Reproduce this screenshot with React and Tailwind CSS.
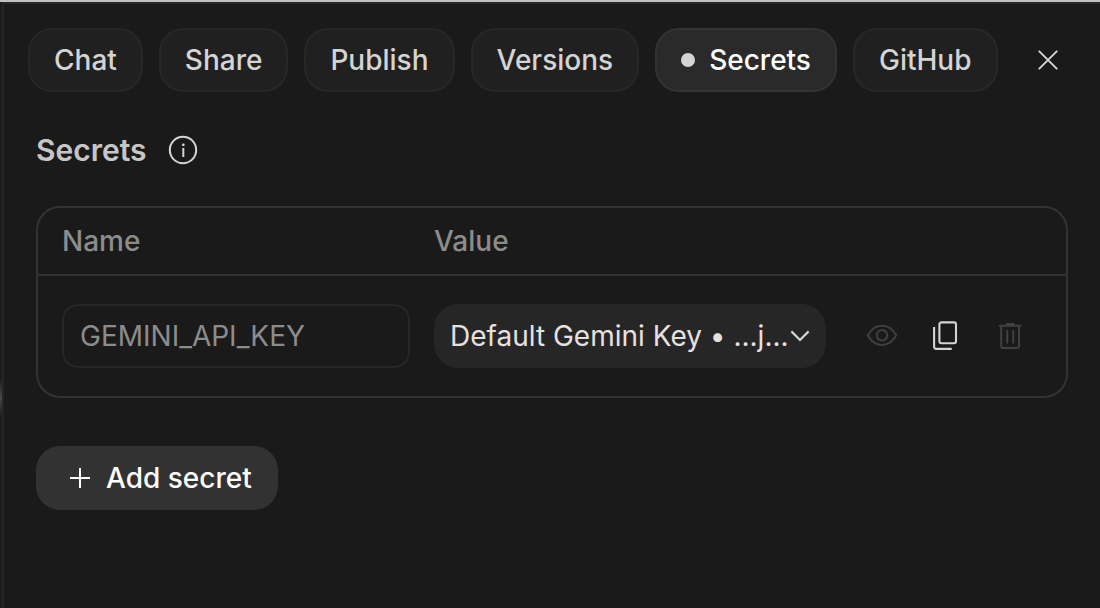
import React, { useState } from "react";

const TABS = ["Chat", "Share", "Publish", "Versions", "Secrets", "GitHub"];

function CloseIcon() {
  return (
    <svg width="24" height="24" viewBox="0 0 24 24" fill="none" stroke="currentColor" strokeWidth="1.9" aria-hidden="true">
      <path d="M2.8 2.8 21.2 21.2M21.2 2.8 2.8 21.2" />
    </svg>
  );
}

function InfoIcon() {
  return (
    <svg width="32" height="32" viewBox="0 0 32 32" fill="none" stroke="currentColor" strokeWidth="2" aria-hidden="true">
      <circle cx="16" cy="16" r="13.2" />
      <path d="M16.3 14v9" />
      <circle cx="16.3" cy="10.8" r="1.4" fill="currentColor" stroke="none" />
    </svg>
  );
}

function ChevronIcon() {
  return (
    <svg width="20" height="12" viewBox="0 0 20 12" fill="none" stroke="currentColor" strokeWidth="2.2" aria-hidden="true">
      <path d="M1.4 1.4 10 10 18.6 1.4" />
    </svg>
  );
}

function EyeIcon() {
  return (
    <svg width="32" height="32" viewBox="0 0 32 32" fill="none" stroke="currentColor" strokeWidth="2" strokeLinejoin="round" aria-hidden="true">
      <path d="M1.8 15.3C5.2 8.9 10.2 5.7 16 5.7S26.8 8.9 30.2 15.3C26.8 21.7 21.8 24.9 16 24.9S5.2 21.7 1.8 15.3Z" />
      <circle cx="16" cy="15.3" r="5.2" />
    </svg>
  );
}

function CopyIcon() {
  return (
    <svg width="32" height="32" viewBox="0 0 32 32" fill="none" stroke="currentColor" strokeWidth="2.1" aria-hidden="true">
      <rect x="9.4" y="2.4" width="16.6" height="20.8" rx="2" />
      <path d="M4.1 7v19.8a2.1 2.1 0 0 0 2.1 2.1H21.7" />
    </svg>
  );
}

function TrashIcon() {
  return (
    <svg width="32" height="32" viewBox="0 0 32 32" fill="none" stroke="currentColor" strokeWidth="2" aria-hidden="true">
      <path d="M5 5.7h22.4M12 4h8.4M7.2 5.7v20.3a2 2 0 0 0 2 2h13.8a2 2 0 0 0 2-2V5.7M13.2 10v13.4M19.2 10v13.4" />
    </svg>
  );
}

function PlusIcon() {
  return (
    <svg width="24" height="24" viewBox="0 0 24 24" fill="none" stroke="currentColor" strokeWidth="2" aria-hidden="true">
      <path d="M12 2v20M2 12h20" />
    </svg>
  );
}

function Tab({ label, active, onSelect }) {
  return (
    <button
      type="button"
      aria-pressed={active}
      onClick={onSelect}
      className={
        active
          ? "flex h-16 items-center gap-3.5 rounded-3xl border-2 border-[#333333] bg-[#2a2a2a] px-6 font-medium text-white"
          : "flex h-16 items-center rounded-3xl border-2 border-[#272727] bg-[#202020] px-6 font-medium text-[#d4d4d4]"
      }
    >
      {active && <span className="size-3.5 rounded-full bg-[#d4d4d4]" />}
      {label}
    </button>
  );
}

export default function App() {
  const [tab, setTab] = useState("Secrets");

  return (
    <div className="flex min-h-screen flex-col border-t-2 border-[#bfc1c2] bg-[#1a1a1a] font-['Inter',sans-serif] text-[28px] leading-9 text-[#d4d4d4]">
      <div className="flex grow">
        <div className="flex w-0.5 shrink-0 flex-col bg-[#1c1c1c] pt-94">
          <span className="h-10 bg-linear-to-b from-[#1c1c1c] via-[#484848] to-[#1c1c1c]" />
        </div>
        <main className="min-w-0 grow border-t-2 border-l-2 border-[#252525]">
          <nav aria-label="Panels" className="flex items-center gap-4 pt-6 pr-5 pl-6">
            {TABS.map((label) => (
              <Tab key={label} label={label} active={label === tab} onSelect={() => setTab(label)} />
            ))}
            <button type="button" aria-label="Close" className="ml-auto flex size-16 items-center justify-center">
              <CloseIcon />
            </button>
          </nav>

          <section className="flex flex-col items-start pt-10 pr-8 pl-8">
            <div className="flex items-center gap-5">
              <h1 className="text-[30px] leading-9 font-semibold text-[#c6c6c6]">Secrets</h1>
              <button type="button" aria-label="About secrets">
                <InfoIcon />
              </button>
            </div>

            <div className="mt-[38px] w-full rounded-3xl border-2 border-[#333333]">
              <table className="w-full table-fixed border-separate border-spacing-0 text-left">
                <thead>
                  <tr className="h-17 text-[#8c8c8c]">
                    <th scope="col" className="w-93 border-b-2 border-[#333333] pl-6 font-medium">Name</th>
                    <th scope="col" className="border-b-2 border-[#333333] pl-6 font-medium">Value</th>
                    <td className="w-60 border-b-2 border-[#333333]" />
                  </tr>
                </thead>
                <tbody>
                  <tr>
                    <td className="py-7 pl-6">
                      <input
                        type="text"
                        aria-label="Secret name"
                        placeholder="GEMINI_API_KEY"
                        className="block h-16 w-full rounded-2xl border-2 border-[#272727] bg-transparent px-4 placeholder:text-[#8c8c8c]"
                      />
                    </td>
                    <td className="py-7 pl-6">
                      <div className="relative">
                        <select
                          aria-label="Secret value"
                          className="block h-16 w-full appearance-none rounded-3xl bg-[#262626] pr-9 pl-4 text-[#e6e1e1]"
                        >
                          <option>Default Gemini Key • ...j...</option>
                        </select>
                        <span className="pointer-events-none absolute inset-y-0 right-4 flex items-center">
                          <ChevronIcon />
                        </span>
                      </div>
                    </td>
                    <td className="px-6 py-7">
                      <div className="flex">
                        <button type="button" disabled aria-label="Show value" className="flex size-16 items-center justify-center text-[#404040]">
                          <EyeIcon />
                        </button>
                        <button type="button" aria-label="Copy value" className="flex size-16 items-center justify-center">
                          <CopyIcon />
                        </button>
                        <button type="button" disabled aria-label="Delete secret" className="flex size-16 items-center justify-center text-[#404040]">
                          <TrashIcon />
                        </button>
                      </div>
                    </td>
                  </tr>
                </tbody>
              </table>
            </div>

            <button
              type="button"
              className="mt-12 flex h-16 items-center gap-3.5 rounded-3xl bg-[#323232] pr-[26px] pl-8 font-medium text-white"
            >
              <PlusIcon />
              Add secret
            </button>
          </section>
        </main>
      </div>
    </div>
  );
}
